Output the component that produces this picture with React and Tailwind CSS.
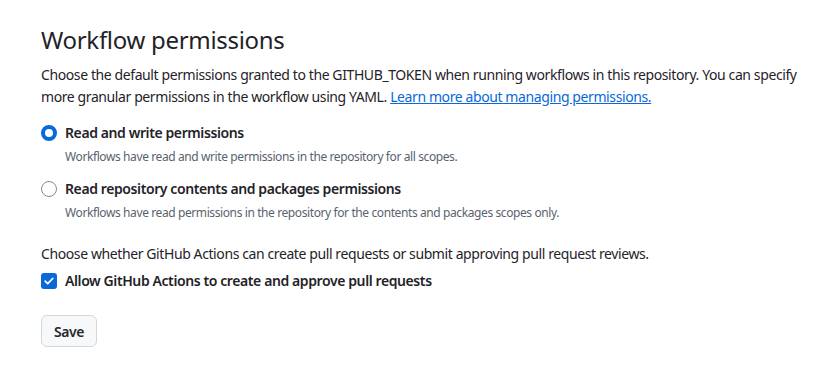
import React, { useState } from 'react';

export default function App() {
  const [mode, setMode] = useState('write');
  const [allowPr, setAllowPr] = useState(true);

  const options = [
    { value: 'write', label: 'Read and write permissions', note: 'Workflows have read and write permissions in the repository for all scopes.' },
    { value: 'read', label: 'Read repository contents and packages permissions', note: 'Workflows have read permissions in the repository for the contents and packages scopes only.' },
  ];

  return (
    <div className="min-h-[383px] bg-white pl-[41px] pr-[20px] pt-[22px] text-[#1f2328] tracking-[-0.4px]" style={{ fontFamily: '"Noto Sans", "Open Sans", sans-serif' }}>
      <h2 className="text-[24px] leading-[36px] font-normal tracking-[-0.3px]">Workflow permissions</h2>

      <p className="mt-[6px] text-[14px] leading-[22px]">
        Choose the default permissions granted to the GITHUB_TOKEN when running workflows in this repository. You can specify more granular permissions in the workflow using YAML.{' '}
        <a href="#" className="text-[#0969da] underline underline-offset-1">Learn more about managing permissions.</a>
      </p>

      <div className="mt-[14px] flex flex-col gap-[12px]">
        {options.map((o) => (
          <label key={o.value} className="flex gap-[8px] cursor-pointer">
            <span className="pt-[3px]">
              <span
                onClick={() => setMode(o.value)}
                className={
                  mode === o.value
                    ? 'block h-4 w-4 rounded-full border-[4px] border-[#0969da] bg-white'
                    : 'block h-4 w-4 rounded-full border border-[#818b98] bg-white'
                }
              />
            </span>
            <span className="flex flex-col">
              <span className="text-[14px] leading-[22px] font-semibold">{o.label}</span>
              <span className="mt-[4px] text-[12px] leading-[18px] text-[#59636e]">{o.note}</span>
            </span>
          </label>
        ))}
      </div>

      <p className="mt-[21px] text-[14px] leading-[22px]">Choose whether GitHub Actions can create pull requests or submit approving pull request reviews.</p>

      <label className="mt-[5px] flex items-center gap-[8px] cursor-pointer" onClick={() => setAllowPr(!allowPr)}>
        <span className={allowPr ? 'flex h-4 w-4 items-center justify-center rounded-[3px] bg-[#0969da]' : 'flex h-4 w-4 rounded-[3px] border border-[#818b98] bg-white'}>
          {allowPr && (
            <svg width="12" height="12" viewBox="0 0 12 12" fill="none">
              <path d="M2.2 6.2l2.5 2.5 5-5.2" stroke="white" strokeWidth="1.8" strokeLinecap="round" strokeLinejoin="round" />
            </svg>
          )}
        </span>
        <span className="text-[14px] leading-[22px] font-semibold">Allow GitHub Actions to create and approve pull requests</span>
      </label>

      <button className="mt-[23px] h-[32px] rounded-[6px] border border-[#d1d9e0] bg-[#f6f8fa] px-[12px] text-[14px] font-semibold text-[#25292e]">Save</button>
    </div>
  );
}
